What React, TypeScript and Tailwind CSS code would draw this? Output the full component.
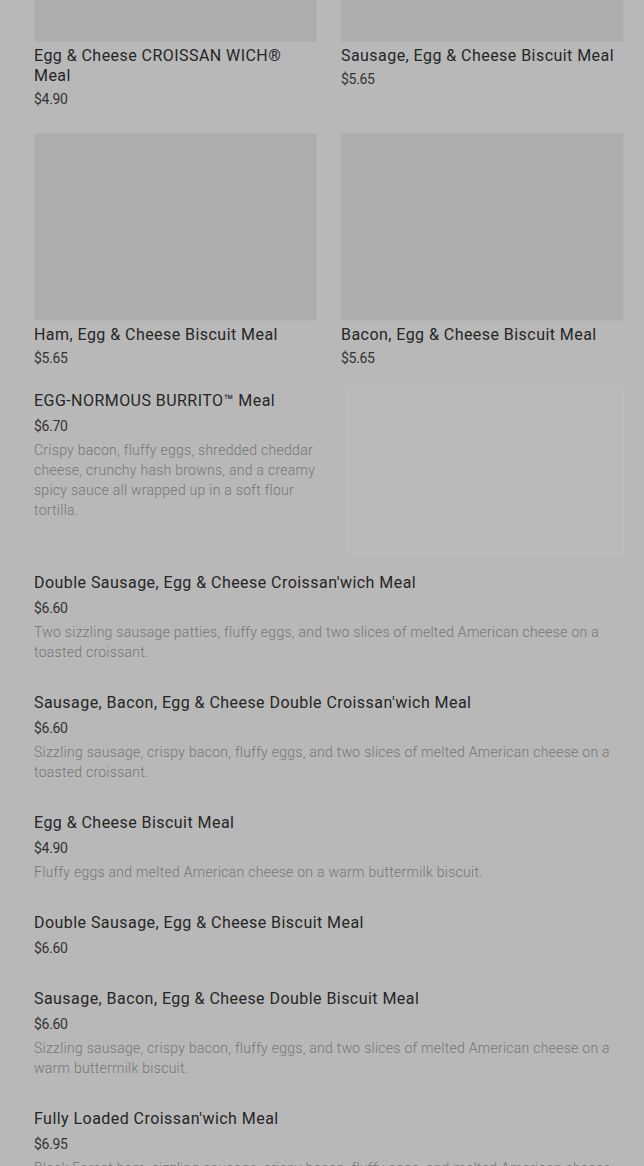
import React from 'react'

type Item = { name: string; price: string; desc?: string }

const gridTop: Item[] = [
  { name: 'Egg & Cheese CROISSAN WICH® Meal', price: '$4.90' },
  { name: 'Sausage, Egg & Cheese Biscuit Meal', price: '$5.65' },
]

const gridMid: Item[] = [
  { name: 'Ham, Egg & Cheese Biscuit Meal', price: '$5.65' },
  { name: 'Bacon, Egg & Cheese Biscuit Meal', price: '$5.65' },
]

const list: Item[] = [
  {
    name: "Double Sausage, Egg & Cheese Croissan'wich Meal",
    price: '$6.60',
    desc: 'Two sizzling sausage patties, fluffy eggs, and two slices of melted American cheese on a toasted croissant.',
  },
  {
    name: "Sausage, Bacon, Egg & Cheese Double Croissan'wich Meal",
    price: '$6.60',
    desc: 'Sizzling sausage, crispy bacon, fluffy eggs, and two slices of melted American cheese on a toasted croissant.',
  },
  {
    name: 'Egg & Cheese Biscuit Meal',
    price: '$4.90',
    desc: 'Fluffy eggs and melted American cheese on a warm buttermilk biscuit.',
  },
  { name: 'Double Sausage, Egg & Cheese Biscuit Meal', price: '$6.60' },
  {
    name: 'Sausage, Bacon, Egg & Cheese Double Biscuit Meal',
    price: '$6.60',
    desc: 'Sizzling sausage, crispy bacon, fluffy eggs, and two slices of melted American cheese on a warm buttermilk biscuit.',
  },
  {
    name: "Fully Loaded Croissan'wich Meal",
    price: '$6.95',
    desc: 'Black Forest ham, sizzling sausage, crispy bacon, fluffy eggs, and melted American cheese on a toasted croissant.',
  },
]

function Card({ item, imgH }: { item: Item; imgH: string }) {
  return (
    <div className="flex flex-col">
      <div className={`${imgH} w-full bg-[#adadad] border border-[#b2b2b2]`} />
      <div className="mt-1 text-[16px] leading-5 font-normal text-[#262626] tracking-[0.45px]">{item.name}</div>
      <div className="mt-[3px] text-[14px] leading-5 text-[#333] tracking-[-0.3px]">{item.price}</div>
    </div>
  )
}

function Row({ item }: { item: Item }) {
  return (
    <div className="flex flex-col">
      <div className="text-[16px] leading-5 font-normal text-[#262626] tracking-[0.45px]">{item.name}</div>
      <div className="mt-[5px] text-[14px] leading-5 text-[#333] tracking-[-0.3px]">{item.price}</div>
      {item.desc && (
        <p className="mt-1 text-[14px] leading-5 font-light text-[#767676] tracking-[0.27px]">{item.desc}</p>
      )}
    </div>
  )
}

export default function App() {
  return (
    <div className="h-[1166px] overflow-hidden bg-[#b8b8b8] pl-[34px] pr-5" style={{ fontFamily: 'Roboto, "Noto Sans", sans-serif' }}>
      <div className="grid grid-cols-2 gap-x-6">
        {gridTop.map((it) => (
          <Card key={it.name} item={it} imgH="h-[42px] border-t-0" />
        ))}
      </div>
      <div className="mt-6 grid grid-cols-2 gap-x-6">
        {gridMid.map((it) => (
          <Card key={it.name} item={it} imgH="h-[188px]" />
        ))}
      </div>

      <div className="mt-[18px] flex">
        <div className="w-[283px] pt-[5px]">
          <Row
            item={{
              name: 'EGG-NORMOUS BURRITO™ Meal',
              price: '$6.70',
              desc: 'Crispy bacon, fluffy eggs, shredded cheddar cheese, crunchy hash browns, and a creamy spicy sauce all wrapped up in a soft flour tortilla.',
            }}
          />
        </div>
        <div className="ml-auto h-[168px] w-[276px] bg-[#b9b9b9] border border-[#bebebe]" />
      </div>

      <div className="mt-[19px] flex flex-col gap-[31px]">
        {list.map((it) => (
          <Row key={it.name} item={it} />
        ))}
      </div>
    </div>
  )
}
